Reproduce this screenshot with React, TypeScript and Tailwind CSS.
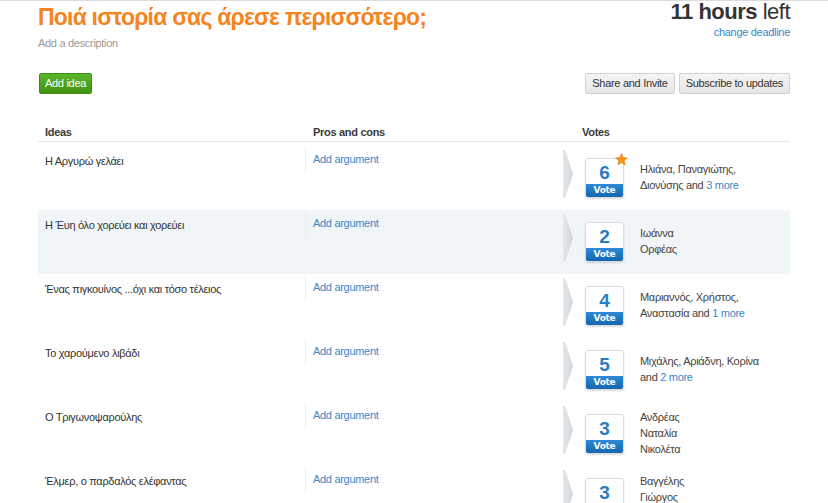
import React from 'react';

type Idea = {
  title: string;
  votes: number;
  names: React.ReactNode[];
  star?: boolean;
  hl?: boolean;
};

const ideas: Idea[] = [
  { title: 'Η Αργυρώ γελάει', votes: 6, star: true, names: ['Ηλιάνα, Παναγιώτης,', <>Διονύσης and <a className="text-[#3b86c6]">3 more</a></>] },
  { title: 'Η Έυη όλο χορεύει και χορεύει', votes: 2, hl: true, names: ['Ιωάννα', 'Ορφέας'] },
  { title: 'Ένας πιγκουίνος ...όχι και τόσο τέλειος', votes: 4, names: ['Μαριαννός, Χρήστος,', <>Αναστασία and <a className="text-[#3b86c6]">1 more</a></>] },
  { title: 'Το χαρούμενο λιβάδι', votes: 5, names: ['Μιχάλης, Αριάδνη, Κορίνα', <>and <a className="text-[#3b86c6]">2 more</a></>] },
  { title: 'Ο Τριγωνοψαρούλης', votes: 3, names: ['Ανδρέας', 'Ναταλία', 'Νικολέτα'] },
  { title: 'Έλμερ, ο παρδαλός ελέφαντας', votes: 3, names: ['Βαγγέλης', 'Γιώργος', 'Μαρία'] },
];

const Arrow = () => (
  <svg width="11" height="48" viewBox="0 0 11 48" className="shrink-0">
    <defs>
      <linearGradient id="ag" x1="0" x2="1" y1="0" y2="0">
        <stop offset="0" stopColor="#e4e8eb" />
        <stop offset="1" stopColor="#cfd5da" />
      </linearGradient>
    </defs>
    <polygon points="0,0 2,0 10,24 2,48 0,48" fill="url(#ag)" />
  </svg>
);

const Star = () => (
  <svg width="13" height="13" viewBox="0 0 24 24" className="absolute -top-[6px] -right-[5px]">
    <polygon points="12,1 15.1,8.3 23,9 17,14.2 18.8,22 12,17.9 5.2,22 7,14.2 1,9 8.9,8.3" fill="#f7941d" stroke="#e07b0c" strokeWidth="1" />
  </svg>
);

const VoteBox = ({ n, star }: { n: number; star?: boolean }) => (
  <div className="relative w-[39px] h-[40px] bg-white border border-[#d8dde1] rounded-[3px] shadow-[0_1px_2px_rgba(0,0,0,0.15)] flex flex-col overflow-visible">
    <div className="flex-1 flex items-center justify-center text-[19px] leading-none font-bold text-[#2a7cc4] pt-[2px]">{n}</div>
    <div className="h-[13px] rounded-b-[2px] bg-gradient-to-b from-[#2d8ad6] to-[#1466b0] text-white text-[9px] font-bold leading-[13px] text-center font-['DejaVu_Sans',sans-serif]">Vote</div>
    {star && <Star />}
  </div>
);

export default function App() {
  return (
    <div className="min-h-screen bg-white border-t border-[#dcdcdc] font-['Liberation_Sans',Arial,sans-serif] text-[#333] tracking-[-0.3px]">
      <div className="mx-[38px]">
        <div className="flex justify-between items-start">
          <div>
            <h1 className="text-[23px] leading-[30px] font-bold text-[#f5841f] mt-[1px] tracking-[-0.8px]">Ποιά ιστορία σας άρεσε περισσότερο;</h1>
            <div className="text-[11px] text-[#999] mt-[3px]">Add a description</div>
          </div>
          <div className="text-right">
            <div className="text-[22px] leading-[22px] text-[#333] tracking-[-0.5px]"><span className="font-bold">11 hours</span> left</div>
            <a className="block text-[11px] text-[#3b86c6] mt-[1px]">change deadline</a>
          </div>
        </div>

        <div className="flex justify-between items-center mt-[21px]">
          <button className="ml-[1px] h-[21px] px-[5px] rounded-[2px] border border-[#3f8c12] bg-gradient-to-b from-[#5ab52a] to-[#3f9311] text-white text-[11px]">Add idea</button>
          <div className="flex gap-[4px]">
            <button className="h-[21px] px-[6px] rounded-[2px] border border-[#d0d0d0] bg-gradient-to-b from-[#f5f5f5] to-[#e6e6e6] text-[11px] text-[#333]">Share and Invite</button>
            <button className="h-[21px] px-[6px] rounded-[2px] border border-[#d0d0d0] bg-gradient-to-b from-[#f5f5f5] to-[#e6e6e6] text-[11px] text-[#333]">Subscribe to updates</button>
          </div>
        </div>

        <div className="mt-[30px] flex border-b border-[#e6e6e6] pb-[1px] text-[11px] font-bold text-[#3a3a3a]">
          <div className="w-[267px] pl-[7px]">Ideas</div>
          <div className="w-[269px] pl-[8px]">Pros and cons</div>
          <div className="pl-[8px]">Votes</div>
        </div>

        <div className="mt-[4px]">
          {ideas.map((it, i) => (
            <div key={i} className={`flex h-[64px] text-[11px] ${it.hl ? 'bg-[#f0f5f8]' : ''}`}>
              <div className="w-[267px] pl-[7px] pt-[7px]">{it.title}</div>
              <div className="w-[258px] pt-[1px]">
                <div className="border-l border-[#ececec] h-[26px] pl-[7px] pt-[4px]">
                  <a className="text-[#3b86c6]">Add argument</a>
                </div>
              </div>
              <div className="flex pt-[4px]">
                <Arrow />
                <div className="ml-[11px] pt-[8px]">
                  <VoteBox n={it.votes} star={it.star} />
                </div>
                <div className="ml-[16px] h-[40px] mt-[7px] flex flex-col justify-center text-[#444] leading-[16px]">
                  {it.names.map((n, j) => (
                    <div key={j}>{n}</div>
                  ))}
                </div>
              </div>
            </div>
          ))}
        </div>
      </div>
    </div>
  );
}
